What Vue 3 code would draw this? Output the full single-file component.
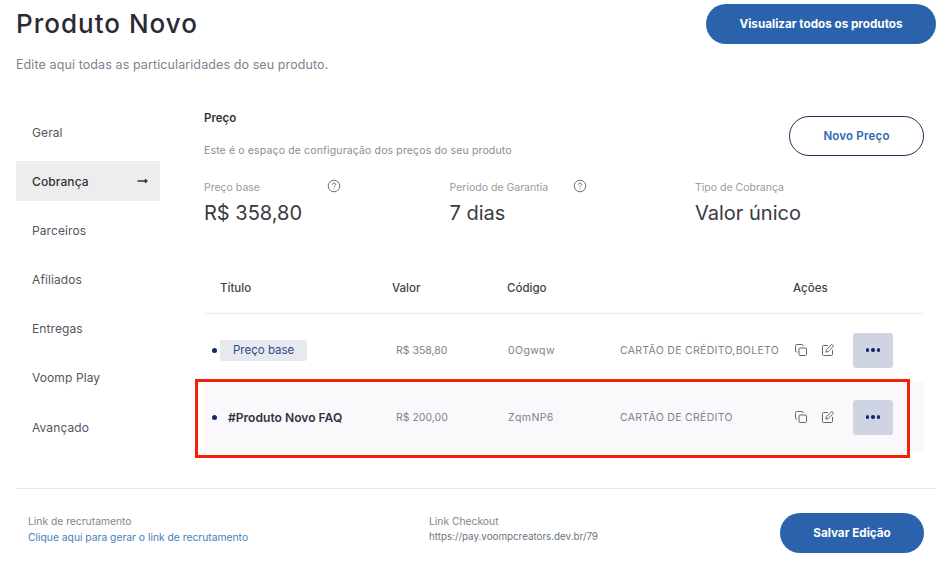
<script setup>
const menu = [
  { label: 'Geral' },
  { label: 'Cobrança', active: true },
  { label: 'Parceiros' },
  { label: 'Afiliados' },
  { label: 'Entregas' },
  { label: 'Voomp Play' },
  { label: 'Avançado' },
]

const stats = [
  { label: 'Preço base', value: 'R$ 358,80', help: true },
  { label: 'Período de Garantia', value: '7 dias', help: true },
  { label: 'Tipo de Cobrança', value: 'Valor único', help: false },
]

const offers = [
  { title: 'Preço base', base: true, price: 'R$ 358,80', code: '0Ogwqw', methods: 'CARTÃO DE CRÉDITO,BOLETO' },
  { title: '#Produto Novo FAQ', base: false, price: 'R$ 200,00', code: 'ZqmNP6', methods: 'CARTÃO DE CRÉDITO' },
]
</script>

<template>
  <div class="page">
    <header class="top">
      <div class="top-row">
        <h1>Produto Novo</h1>
        <button class="btn-primary btn-all">Visualizar todos os produtos</button>
      </div>
      <p class="lead">Edite aqui todas as particularidades do seu produto.</p>
    </header>

    <div class="body">
      <nav class="menu">
        <a v-for="item in menu" :key="item.label" :class="['menu-item', { active: item.active }]">
          {{ item.label }}
          <svg v-if="item.active" width="11" height="8" viewBox="0 0 11 8" fill="none" stroke="#333" stroke-width="1.3">
            <path d="M0.5 4H10M8 2.2L10 4L8 5.8" />
          </svg>
        </a>
      </nav>

      <main class="content">
        <div class="content-head">
          <div>
            <h2>Preço</h2>
            <p class="hint">Este é o espaço de configuração dos preços do seu produto</p>
          </div>
          <button class="btn-outline">Novo Preço</button>
        </div>

        <div class="stats">
          <div v-for="s in stats" :key="s.label" class="stat">
            <div class="stat-label">
              <span>{{ s.label }}</span>
              <svg v-if="s.help" class="help" width="14" height="14" viewBox="0 0 14 14" fill="none" stroke="#6f6f78" stroke-width="1">
                <circle cx="7" cy="7" r="5.8" />
                <path d="M5.4 5.6C5.4 3.6 8.7 3.6 8.7 5.5C8.7 6.7 7 6.8 7 8.1" />
                <path d="M7 9.6V10.3" />
              </svg>
            </div>
            <div class="stat-value">{{ s.value }}</div>
          </div>
        </div>

        <div class="table">
          <div class="row head">
            <span class="title-head">Título</span>
            <span>Valor</span>
            <span>Código</span>
            <span></span>
            <span>Ações</span>
          </div>
          <div v-for="o in offers" :key="o.code" :class="['row', 'offer', { plain: o.base, marked: !o.base }]">
            <span class="offer-title">
              <i class="dot"></i>
              <span v-if="o.base" class="tag">{{ o.title }}</span>
              <strong v-else>{{ o.title }}</strong>
            </span>
            <span class="cell price">{{ o.price }}</span>
            <span class="cell code">{{ o.code }}</span>
            <span class="cell methods">{{ o.methods }}</span>
            <span class="actions">
              <svg width="14" height="14" viewBox="0 0 14 14" fill="none" stroke="#666" stroke-width="1">
                <rect x="5" y="5" width="7.5" height="7.5" rx="1" />
                <path d="M3.2 9H2.6C1.9 9 1.5 8.6 1.5 7.9V2.6C1.5 1.9 1.9 1.5 2.6 1.5H7.9C8.6 1.5 9 1.9 9 2.6V3.2" />
              </svg>
              <svg class="edit" width="14" height="14" viewBox="0 0 14 14" fill="none" stroke="#666" stroke-width="1">
                <path d="M7 2.5H2.6C1.9 2.5 1.5 2.9 1.5 3.6V11.4C1.5 12.1 1.9 12.5 2.6 12.5H10.4C11.1 12.5 11.5 12.1 11.5 11.4V7" />
                <path d="M10.8 1.4L12.6 3.2L7.2 8.6L4.9 9.1L5.4 6.8Z" />
              </svg>
              <button class="more"><i></i><i></i><i></i></button>
            </span>
            <span v-if="!o.base" class="red-mark"></span>
          </div>
        </div>
      </main>
    </div>

    <footer class="foot">
      <div class="foot-link recruit">
        <span class="foot-label">Link de recrutamento</span>
        <a class="foot-action">Clique aqui para gerar o link de recrutamento</a>
      </div>
      <div class="foot-link checkout">
        <span class="foot-label">Link Checkout</span>
        <a class="foot-url">https://pay.voompcreators.dev.br/79</a>
      </div>
      <button class="btn-primary btn-save">Salvar Edição</button>
    </footer>
  </div>
</template>

<style scoped>
.page {
  width: 952px;
  height: 578px;
  overflow: hidden;
  box-sizing: border-box;
  padding: 4px 16px 0;
  background: #fff;
  font-family: Inter, "Open Sans", sans-serif;
  color: #333;
}

.top-row {
  display: flex;
  justify-content: space-between;
  align-items: center;
  height: 40px;
}

h1 {
  margin: 0 0 2px;
  font-size: 26px;
  font-weight: 500;
  letter-spacing: 1px;
  color: #2a2a33;
}

.lead {
  margin: 13px 0 0;
  font-size: 12.5px;
  line-height: 15px;
  letter-spacing: 0.1px;
  color: #81818e;
}

button {
  border: none;
  font-family: inherit;
  cursor: pointer;
}

.btn-primary {
  background: #2a63ab;
  color: #fff;
  font-weight: 700;
  font-size: 11.7px;
  border-radius: 20px;
  height: 40px;
}

.btn-all {
  width: 230px;
}

.body {
  display: flex;
  margin-top: 40px;
  height: 376px;
}

.menu {
  width: 144px;
  display: flex;
  flex-direction: column;
  gap: 9.2px;
}

.menu-item {
  display: flex;
  align-items: center;
  justify-content: space-between;
  height: 40px;
  padding: 0 12px 0 16px;
  font-size: 12px;
  color: #555560;
  letter-spacing: 0.1px;
}

.menu-item.active {
  background: #ededf0;
  color: #333;
  font-weight: 500;
}

.content {
  width: 720px;
  margin-left: 44px;
}

.content-head {
  display: flex;
  justify-content: space-between;
  height: 48px;
}

h2 {
  margin: 0;
  font-size: 11.5px;
  line-height: 12px;
  font-weight: 600;
  color: #333;
}

.hint {
  margin: 21px 0 0;
  font-size: 10.5px;
  line-height: 12px;
  letter-spacing: 0.14px;
  color: #8b8b96;
}

.btn-outline {
  width: 135px;
  height: 40px;
  margin-top: 4px;
  background: #fff;
  border: 1px solid #1e2f5e;
  border-radius: 20px;
  color: #2f66ad;
  font-weight: 600;
  font-size: 11.5px;
  letter-spacing: 0.2px;
}

.stats {
  display: grid;
  grid-template-columns: 245.5px 245.5px 1fr;
  margin-top: 20px;
}

.stat-label {
  display: flex;
  align-items: center;
  width: 137px;
  justify-content: space-between;
  height: 14px;
  font-size: 10.5px;
  color: #9a9aa4;
}

.help {
  margin-top: -3px;
}

.stat-value {
  margin-top: 6px;
  font-size: 20px;
  line-height: 26px;
  color: #3a3a42;
}

.table {
  margin-top: 37px;
}

.row {
  display: grid;
  grid-template-columns: 188px 115px 113px 173px 131px;
  align-items: center;
  position: relative;
}

.head {
  height: 50px;
  border-bottom: 1px solid #ececef;
  font-size: 11.5px;
  font-weight: 500;
  color: #444;
}

.title-head {
  padding-left: 16px;
}

.plain {
  height: 68px;
  box-sizing: border-box;
  padding-top: 4px;
}

.marked {
  background: #f9f9fc;
  height: 70px;
}

.offer-title {
  display: flex;
  align-items: center;
  font-size: 11.5px;
}

.dot {
  width: 5px;
  height: 5px;
  border-radius: 50%;
  background: #12276e;
  margin: 0 3px 0 8px;
  flex: none;
}

.tag {
  background: #e8e9f0;
  color: #2f4a85;
  border-radius: 3px;
  padding: 3px 13px;
  font-size: 11.5px;
  line-height: 15px;
}

.offer-title strong {
  margin-left: 8px;
  font-size: 12.1px;
  font-weight: 600;
  color: #33333c;
  white-space: nowrap;
}

.cell {
  font-size: 10.5px;
  color: #81818a;
}

.price {
  padding-left: 4px;
}

.code {
  padding-left: 1px;
  letter-spacing: 0.4px;
}

.methods {
  white-space: nowrap;
  letter-spacing: 0.3px;
}

.actions {
  display: flex;
  align-items: center;
  padding-left: 1px;
}

.edit {
  margin-left: 13px;
}

.more {
  width: 40px;
  height: 35px;
  margin-left: 18px;
  background: #cfd4e2;
  border-radius: 3px;
  display: flex;
  align-items: center;
  justify-content: center;
  gap: 2px;
}

.more i {
  width: 3.5px;
  height: 3.5px;
  border-radius: 50%;
  background: #12276e;
}

.red-mark {
  position: absolute;
  left: -9px;
  top: -3px;
  width: 715px;
  height: 79px;
  box-sizing: border-box;
  border: 3px solid #f4200c;
  pointer-events: none;
}

.foot {
  display: flex;
  align-items: center;
  border-top: 1px solid #e9e9ec;
  height: 88px;
  padding: 0 12px;
}

.foot-link {
  display: flex;
  flex-direction: column;
  gap: 4px;
  margin-top: -9px;
  font-size: 10.3px;
  line-height: 12px;
}

.recruit {
  width: 401px;
}

.checkout {
  flex: 1;
}

.foot-label {
  color: #85858e;
}

.foot-action {
  color: #4a7dbd;
}

.foot-url {
  font-size: 9.8px;
  color: #6b7480;
}

.btn-save {
  width: 144px;
}
</style>

<style>
html,
body {
  margin: 0;
  background: #fff;
}
</style>
